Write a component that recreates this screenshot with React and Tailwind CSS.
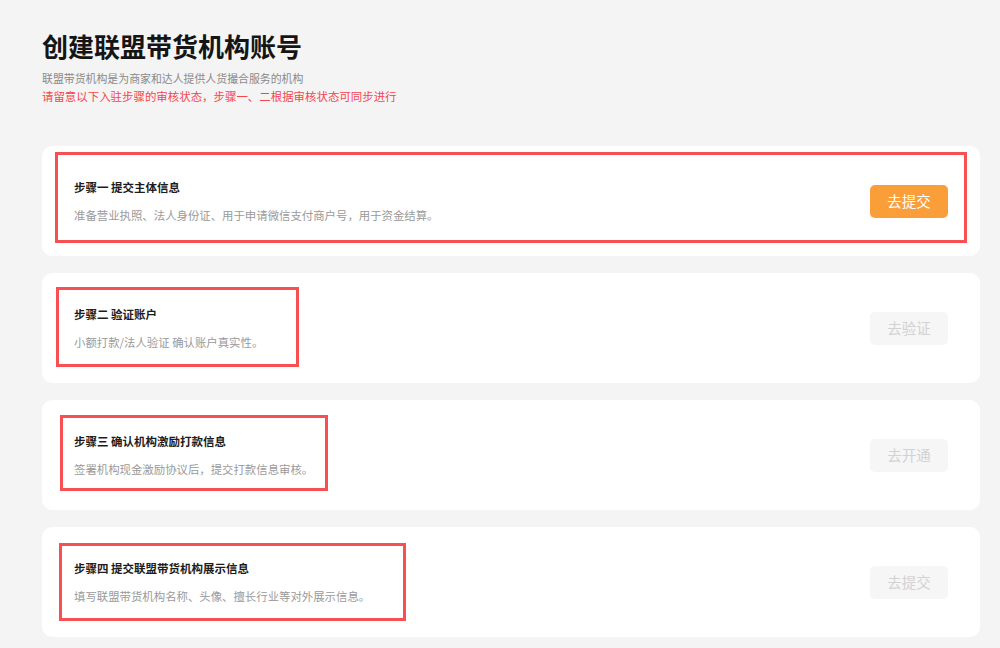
import React from "react";

const steps = [
  {
    title: "步骤一 提交主体信息",
    desc: "准备营业执照、法人身份证、用于申请微信支付商户号，用于资金结算。",
    action: "去提交",
    active: true,
    mark: "left-[13px] top-[6px] w-[912px] h-[91px]",
  },
  {
    title: "步骤二 验证账户",
    desc: "小额打款/法人验证 确认账户真实性。",
    action: "去验证",
    mark: "left-[14px] top-[14px] w-[243px] h-[80px]",
  },
  {
    title: "步骤三 确认机构激励打款信息",
    desc: "签署机构现金激励协议后，提交打款信息审核。",
    action: "去开通",
    mark: "left-[18px] top-[15px] w-[268px] h-[76px]",
  },
  {
    title: "步骤四 提交联盟带货机构展示信息",
    desc: "填写联盟带货机构名称、头像、擅长行业等对外展示信息。",
    action: "去提交",
    mark: "left-[17px] top-[16px] w-[347px] h-[78px]",
  },
];

const StepCard = ({ step }) => (
  <div className="relative flex items-center justify-between bg-white rounded-[10px] h-[110px] pl-[32px] pr-[32px]">
    <div className="flex flex-col">
      <h3 className="text-[11.5px] font-bold text-[#1c1c1c] leading-[16px]">
        {step.title}
      </h3>
      <p className="text-[11.4px] text-[#9a9a9a] leading-[16px] mt-[12px]">
        {step.desc}
      </p>
    </div>
    {step.active ? (
      <button className="w-[78px] h-[33px] rounded-[5px] bg-[#fa9e3a] text-white text-[14.5px]">
        {step.action}
      </button>
    ) : (
      <button className="w-[78px] h-[33px] rounded-[5px] bg-[#f6f6f6] text-[#d2d2d2] text-[14.5px]">
        {step.action}
      </button>
    )}
    {/* red annotation box */}
    <div
      className={`absolute ${step.mark} border-[3px] border-[#f74f52] pointer-events-none`}
    />
  </div>
);

const App = () => {
  return (
    <div
      className="w-[1000px] h-[648px] overflow-hidden bg-[#f4f4f4] pl-[42px] pr-[20px]"
      style={{ fontFamily: '"Noto Sans CJK SC", "Noto Sans", sans-serif' }}
    >
      {/* Header */}
      <div className="pt-[26px]">
        <h1 className="text-[26px] font-bold text-[#151515] leading-[40px]">
          创建联盟带货机构账号
        </h1>
        <p className="text-[10.9px] text-[#8a8a8a] leading-[18px] mt-[3px]">
          联盟带货机构是为商家和达人提供人货撮合服务的机构
        </p>
        <p className="text-[11.45px] text-[#f5464e] leading-[18px] mt-0">
          请留意以下入驻步骤的审核状态，步骤一、二根据审核状态可同步进行
        </p>
      </div>

      {/* Steps */}
      <div className="flex flex-col gap-[17px] mt-[41px]">
        {steps.map((s, i) => (
          <StepCard key={i} step={s} />
        ))}
      </div>
    </div>
  );
};

export default App;
